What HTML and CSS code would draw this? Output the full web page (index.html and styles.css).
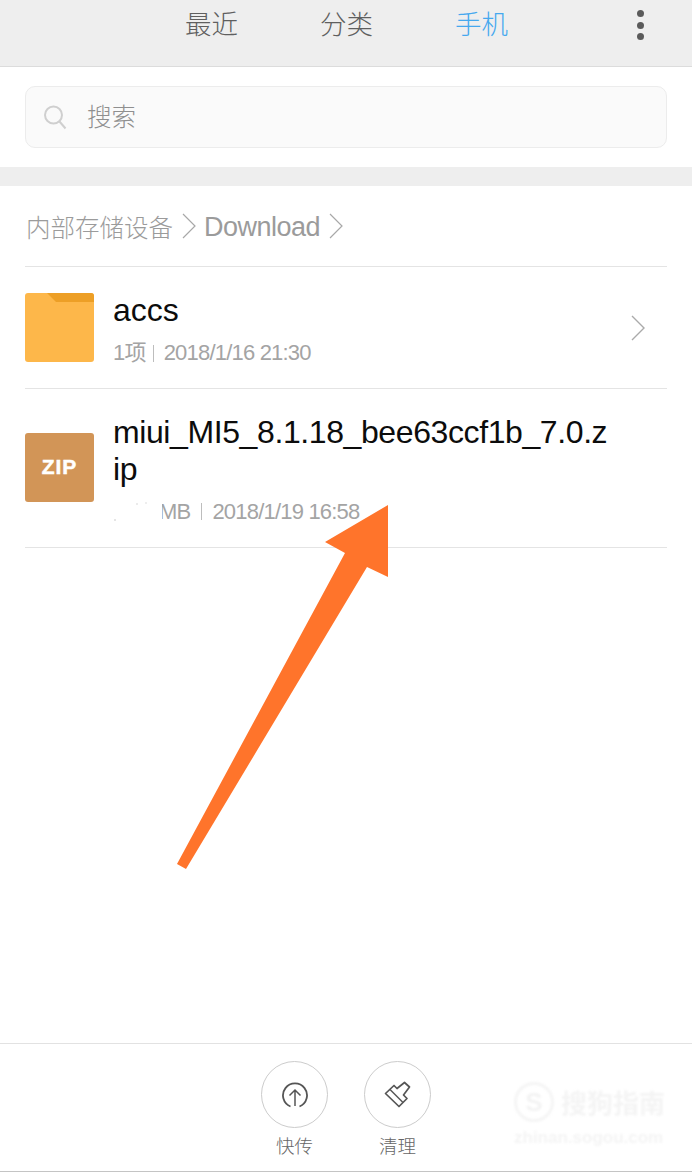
FILE: index.html
```html
<!DOCTYPE html>
<html lang="zh">
<head>
<meta charset="utf-8">
<title>手机</title>
<link rel="stylesheet" href="styles.css">
</head>
<body>
<div class="page">
  <header class="topbar">
    <nav class="tabs">
      <span class="tab">最近</span>
      <span class="tab">分类</span>
      <span class="tab active">手机</span>
    </nav>
    <div class="more"><i></i><i></i><i></i></div>
  </header>
  <section class="search-wrap">
    <div class="search">
      <svg class="search-icon" width="24" height="26" viewBox="0 0 24 26"><circle cx="10.5" cy="11" r="8.5" fill="none" stroke="#cfcfcf" stroke-width="2"/><path d="M16.500 17.500L22.500 24.500" fill="none" stroke="#cfcfcf" stroke-width="2"/></svg>
      <span class="search-text">搜索</span>
    </div>
  </section>
  <div class="band"></div>
  <div class="crumbs">
    <span>内部存储设备</span>
    <svg class="crumb-arrow" width="14" height="26" viewBox="0 0 14 26"><path d="M1 1L13 13L1 25" fill="none" stroke="#a8a8a8" stroke-width="1.200"/></svg>
    <span class="crumb-latin">Download</span>
    <svg class="crumb-arrow" width="14" height="26" viewBox="0 0 14 26"><path d="M1 1L13 13L1 25" fill="none" stroke="#a8a8a8" stroke-width="1.200"/></svg>
  </div>
  <ul class="list">
    <li class="row row-folder">
      <svg class="file-icon" width="69" height="69" viewBox="0 0 69 69"><rect width="69" height="69" rx="3" fill="#fdb74a"/><path d="M22 0H66a3 3 0 0 1 3 3V9H31Z" fill="#ed9f26"/></svg>
      <div class="info">
        <div class="name">accs</div>
        <div class="meta"><span>1项</span><i class="sep"></i><span>2018/1/16 21:30</span></div>
      </div>
      <svg class="chev" width="14" height="26" viewBox="0 0 14 26"><path d="M1 1L13 13L1 25" fill="none" stroke="#aaaaaa" stroke-width="1.400"/></svg>
    </li>
    <li class="row row-zip">
      <div class="zip-icon">ZIP</div>
      <div class="info">
        <div class="name name-long">miui_MI5_8.1.18_bee63ccf1b_7.0.z<br>ip</div>
        <div class="meta meta-zip"><span class="size">MB</span><i class="sep"></i><span>2018/1/19 16:58</span></div>
      </div>
    </li>
  </ul>
  <div class="spacer"></div>
  <footer class="actions">
    <div class="action">
      <div class="circle">
        <svg width="28" height="28" viewBox="0 0 28 28"><path d="M9.500 25.500A12 12 0 1 1 18.500 25.500" fill="none" stroke="#555555" stroke-width="1.800"/><path d="M14 25V9M8.500 14.500L14 9L19.500 14.500" fill="none" stroke="#555555" stroke-width="1.500"/></svg>
      </div>
      <span class="action-label">快传</span>
    </div>
    <div class="action">
      <div class="circle">
        <svg width="28" height="28" viewBox="0 0 28 28"><path d="M1.500 12.500L10 4.500L13 7.500L20.500 1.500L25.500 6L19.500 14L23 17.500L15 25.500Z" fill="none" stroke="#555555" stroke-width="1.700" stroke-linejoin="round"/><path d="M6 8.500L19 21.500" fill="none" stroke="#555555" stroke-width="1.400"/></svg>
      </div>
      <span class="action-label">清理</span>
    </div>
  </footer>
</div>
<svg class="arrow" width="692" height="1172" viewBox="0 0 692 1172"><path d="M388 505L325 542L345 553L177 864L186 869L367 567L388 577Z" fill="#ff742b"/></svg>
<div class="watermark">
  <div class="wm-top">
    <div class="wm-logo">S</div>
    <span class="wm-name">搜狗指南</span>
  </div>
  <div class="wm-url">zhinan.sogou.com</div>
</div>
</body>
</html>
```

FILE: styles.css
```css
* { box-sizing: border-box; }
html, body { margin: 0; padding: 0; background: #fff; }
body { font-family: "Liberation Sans", "Noto Sans CJK SC", sans-serif; overflow: hidden; }
.page { width: 692px; height: 1172px; display: flex; flex-direction: column; border-bottom: 1px solid #c4c4c4; }

.topbar { height: 67px; background: #eeeeee; border-bottom: 1px solid #dcdcdc; display: flex; align-items: flex-start; position: relative; flex: none; }
.tabs { display: flex; gap: 82px; margin-left: 185px; padding-top: 5px; }
.tab { font-family: "Noto Sans CJK SC", sans-serif; font-size: 26.500px; line-height: 36px; color: #5f5f5f; font-weight: 300; }
.tab.active { color: #45a8ee; }
.more { position: absolute; left: 637px; top: 10px; display: flex; flex-direction: column; gap: 4.500px; }
.more i { width: 7px; height: 7px; border-radius: 50%; background: #5a5a5a; display: block; }

.search-wrap { padding: 19px 25px; flex: none; height: 100px; }
.search { height: 62px; background: #fafafa; border: 1px solid #ececec; border-radius: 10px; display: flex; align-items: center; padding-left: 17px; }
.search-icon { flex: none; }
.search-text { font-family: "Noto Sans CJK SC", sans-serif; font-weight: 300; font-size: 24.500px; line-height: 32px; color: #8f8f8f; margin: -2px 0 0 20px; }

.band { height: 19px; background: #eeeeee; flex: none; }

.crumbs { height: 81px; margin: 0 25px; padding-left: 1px; border-bottom: 1px solid #e4e4e4; display: flex; align-items: center; flex: none; color: #9b9b9b; font-family: "Noto Sans CJK SC", sans-serif; font-weight: 300; font-size: 24.500px; }
.crumb-arrow { margin: 0 8px 0 9px; flex: none; }
.crumb-latin { font-family: "Liberation Sans", sans-serif; font-size: 27px; letter-spacing: -0.500px; padding-top: 3px; }

.list { list-style: none; margin: 0; padding: 0 25px; flex: none; }
.row { display: flex; align-items: center; border-bottom: 1px solid #e4e4e4; position: relative; }
.row-folder { height: 122px; }
.row-zip { height: 159px; }
.file-icon { flex: none; }
.zip-icon { width: 69px; height: 69px; flex: none; margin-top: -2px; background: #d29557; border-radius: 3px; color: #fff; font-family: "Liberation Sans", sans-serif; font-weight: 700; font-size: 21px; letter-spacing: 1px; -webkit-text-stroke: 0.500px #fff; display: flex; align-items: center; justify-content: center; }
.info { margin-left: 19px; flex: 1; min-width: 0; }
.row-folder .info { margin-top: 4px; }
.row-zip .info { margin-top: 3px; }
.name { font-size: 32px; line-height: 37px; color: #0c0c0c; }
.name-long { letter-spacing: -0.400px; }
.meta { display: flex; align-items: center; margin-top: 10px; color: #a4a4a4; font-size: 22px; line-height: 28px; letter-spacing: -0.800px; }
.meta-zip { margin-top: 10px; }
.sep { width: 1px; height: 17px; background: #bdbdbd; margin: 0 10px 0 7px; display: block; flex: none; }
.meta-zip .sep { margin: 0 10px 0 11px; }
.size { margin-left: 46px; position: relative; }
.size::before { content: ""; position: absolute; left: -1px; top: 4px; width: 4px; height: 22px; background: #fff; }
.size::after { content: ""; position: absolute; left: -45px; top: 21px; width: 2px; height: 2px; border-radius: 50%; background: #dcdcdc; box-shadow: 22px -16px 0 0 #e4e4e4, 31px -17px 0 0 #e8e8e8; }
.chev { position: absolute; right: 22px; top: 48px; }

.spacer { flex: 1; }

.actions { height: 128px; border-top: 1px solid #e2e2e2; display: flex; justify-content: center; gap: 36px; padding-top: 17px; flex: none; }
.action { width: 67px; display: flex; flex-direction: column; align-items: center; }
.circle { width: 67px; height: 67px; border-radius: 50%; border: 1px solid #cccccc; display: flex; align-items: center; justify-content: center; }
.action-label { font-family: "Noto Sans CJK SC", sans-serif; font-weight: 300; font-size: 18.500px; line-height: 26px; color: #666666; margin-top: 4px; }

.arrow { position: absolute; left: 0; top: 0; pointer-events: none; }

.watermark { position: absolute; left: 514px; top: 1082px; width: 160px; filter: blur(0.8px); }
.wm-top { display: flex; align-items: center; gap: 7px; }
.wm-logo { width: 40px; height: 40px; border-radius: 50%; border: 3px solid #f5f5f5; color: #f3f3f3; font-weight: 700; font-size: 26px; line-height: 34px; text-align: center; flex: none; }
.wm-name { font-family: "Noto Sans CJK SC", sans-serif; font-weight: 700; font-size: 26px; line-height: 40px; color: #f4f4f4; }
.wm-url { font-size: 17px; line-height: 20px; margin-top: 6px; color: #f4f4f4; font-weight: 700; }
```
